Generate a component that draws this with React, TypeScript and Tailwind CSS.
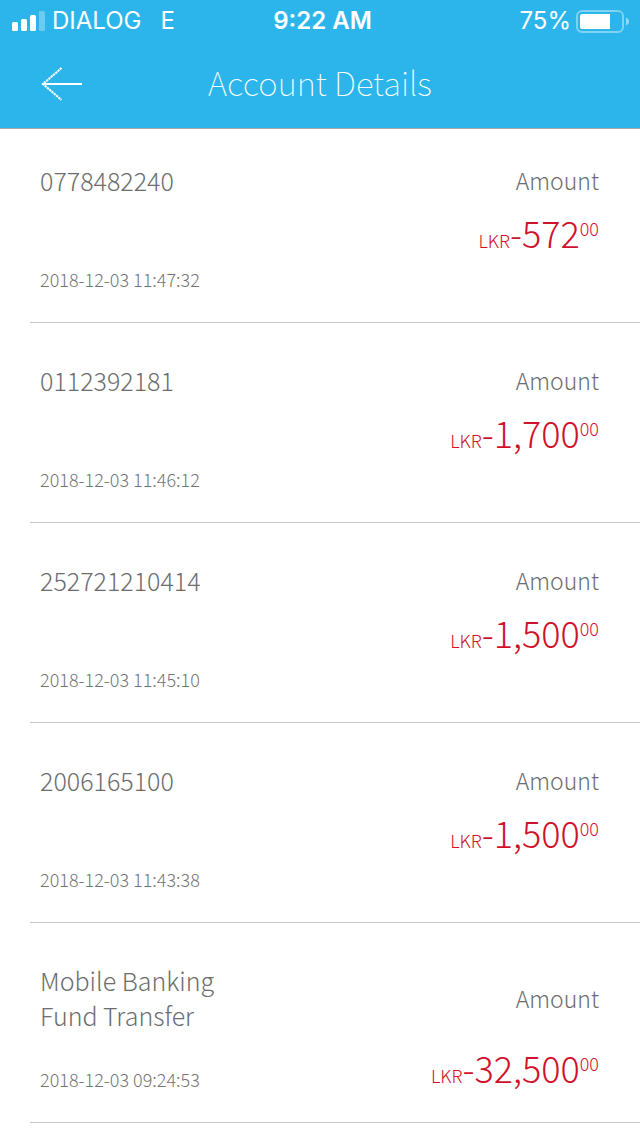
type Transaction = {
  name: string;
  date: string;
  whole: string;
  cents: string;
};

const transactions: Transaction[] = [
  { name: '0778482240', date: '2018-12-03 11:47:32', whole: '-572', cents: '00' },
  { name: '0112392181', date: '2018-12-03 11:46:12', whole: '-1,700', cents: '00' },
  { name: '252721210414', date: '2018-12-03 11:45:10', whole: '-1,500', cents: '00' },
  { name: '2006165100', date: '2018-12-03 11:43:38', whole: '-1,500', cents: '00' },
  { name: 'Mobile Banking Fund Transfer', date: '2018-12-03 09:24:53', whole: '-32,500', cents: '00' },
];

function SignalIcon() {
  return (
    <svg width="33" height="20" viewBox="0 0 33 20" fill="white" aria-hidden="true">
      <rect x="0" y="11" width="6" height="9" rx="1.5" />
      <rect x="9" y="8" width="6" height="12" rx="1.5" />
      <rect x="18" y="4" width="6" height="16" rx="1.5" />
      <rect x="27" y="0" width="6" height="20" rx="1.5" opacity="0.3" />
    </svg>
  );
}

function BatteryIcon() {
  return (
    <svg width="53" height="23" viewBox="0 0 53 23" aria-hidden="true">
      <rect x="1" y="1" width="46" height="21" rx="5" fill="none" stroke="white" strokeWidth="2" opacity="0.4" />
      <path d="M50 7.5c4 1.500 4 6.500 0 8z" fill="white" opacity="0.5" />
      <path d="M6 4h28v15H6a2 2 0 0 1-2-2V6a2 2 0 0 1 2-2z" fill="white" />
    </svg>
  );
}

function StatusBar() {
  return (
    <div className="grid h-10 grid-cols-[1fr_auto_1fr] items-center pt-0.5 pr-[11px] pl-3 font-['Inter',sans-serif] text-2xl leading-9">
      <div className="flex items-center gap-[7px]">
        <SignalIcon />
        <span>DIALOG</span>
        <span className="ml-3">E</span>
      </div>
      <span className="pl-1 font-semibold">9:22 AM</span>
      <div className="flex items-center justify-end gap-[5px]">
        <span>75%</span>
        <BatteryIcon />
      </div>
    </div>
  );
}

function TransactionRow({ name, date, whole, cents }: Transaction) {
  return (
    <li className="ml-[30px] border-b border-[#c8c7cc] pr-[41px] pb-[31px] pl-[10px]">
      <div className="flex min-h-32 flex-col">
        <div className="flex items-center justify-between text-[#6d6d6d]">
          <h2 className="max-w-[200px] text-[25px] leading-[35px] font-light">{name}</h2>
          <span className="text-[23px] leading-[35px] font-light">Amount</span>
        </div>
        <div className="flex flex-1 justify-between pt-[14px]">
          <time className="self-end text-lg leading-6 font-light text-[#757575]">{date}</time>
          <p className="flex h-10 items-baseline text-4xl leading-10 font-light text-[#d0112b]">
            <span className="text-lg leading-10">LKR</span>
            {whole}
            <sup className="top-0 self-start text-lg leading-8">{cents}</sup>
          </p>
        </div>
      </div>
    </li>
  );
}

export default function App() {
  return (
    <div className="min-h-screen bg-white font-['Noto_Sans_CJK_SC',sans-serif]">
      <header className="border-b border-[#a7a7aa] bg-[#2bb5ea] text-white">
        <StatusBar />
        <div className="grid h-22 grid-cols-[1fr_auto_1fr] items-center">
          <button type="button" aria-label="Back" className="ml-10 w-11">
            <svg width="43" height="34" viewBox="0 0 43 34" fill="none" stroke="white" strokeWidth="2" aria-hidden="true">
              <path d="M2 17h40" />
              <path d="M21.500 1L3 17l18.500 16" strokeOpacity="0.3" />
              <path d="M21.500 1L3 17l18.500 16" strokeDasharray="2 1" />
            </svg>
          </button>
          <h1 className="pb-1 text-[33px] leading-10 font-thin">Account Details</h1>
        </div>
      </header>
      <ul className="flex flex-col gap-10 pt-[34px]">
        {transactions.map((tx) => (
          <TransactionRow key={tx.date} {...tx} />
        ))}
      </ul>
    </div>
  );
}
